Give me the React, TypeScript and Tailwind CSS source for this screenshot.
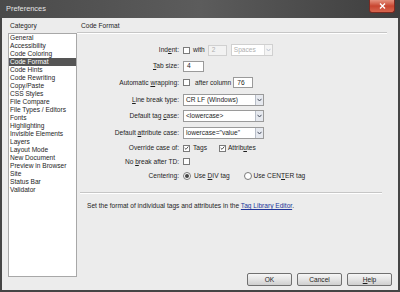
import React from 'react';

const categories = [
  'General',
  'Accessibility',
  'Code Coloring',
  'Code Format',
  'Code Hints',
  'Code Rewriting',
  'Copy/Paste',
  'CSS Styles',
  'File Compare',
  'File Types / Editors',
  'Fonts',
  'Highlighting',
  'Invisible Elements',
  'Layers',
  'Layout Mode',
  'New Document',
  'Preview in Browser',
  'Site',
  'Status Bar',
  'Validator',
];

function U({ children }: { children: React.ReactNode }) {
  return <span className="underline underline-offset-1">{children}</span>;
}

function Check({ checked = false }: { checked?: boolean }) {
  return (
    <span className="flex h-[7px] w-[7px] items-center justify-center border border-[#7a7a7a] bg-white">
      {checked && (
        <svg width="6" height="6" viewBox="0 0 6 6">
          <path d="M0.8 3 L2.4 4.6 L5.2 1.2" fill="none" stroke="#333" strokeWidth="1" />
        </svg>
      )}
    </span>
  );
}

function Radio({ checked = false }: { checked?: boolean }) {
  return (
    <span className="flex h-[8px] w-[8px] items-center justify-center rounded-full border border-[#7a7a7a] bg-white">
      {checked && <span className="h-[4px] w-[4px] rounded-full bg-[#444]" />}
    </span>
  );
}

function Arrow({ disabled = false }: { disabled?: boolean }) {
  return (
    <span
      className={`flex h-full w-[8px] items-center justify-center border-l ${
        disabled ? 'border-[#dcdcdc] bg-[#f4f4f4]' : 'border-[#b8bec8] bg-[#e6e9ef]'
      }`}
    >
      <svg width="5" height="4" viewBox="0 0 5 4">
        <path d="M0.5 0.8 L2.5 3 L4.5 0.8" fill="none" stroke={disabled ? '#b8c0d0' : '#4a5060'} strokeWidth="1" />
      </svg>
    </span>
  );
}

function Select({ value, w, disabled = false }: { value: string; w: string; disabled?: boolean }) {
  return (
    <div
      className={`flex h-[12px] items-center border bg-white ${w} ${
        disabled ? 'border-[#d0d0d0] text-[#b0b0b0]' : 'border-[#9a9a9a] text-[#1e1e1e]'
      }`}
    >
      <span className="flex-1 truncate pl-[2px]">{value}</span>
      <Arrow disabled={disabled} />
    </div>
  );
}

function Field({ value, w, disabled = false }: { value: string; w: string; disabled?: boolean }) {
  return (
    <div
      className={`flex h-[11px] items-center border pl-[3px] ${w} ${
        disabled ? 'border-[#d0d0d0] bg-[#f2f2f2] text-[#b0b0b0]' : 'border-[#9a9a9a] bg-white text-[#1e1e1e]'
      }`}
    >
      {value}
    </div>
  );
}

function Row({ label, h, children }: { label: React.ReactNode; h: string; children: React.ReactNode }) {
  return (
    <div className={`flex items-center ${h}`}>
      <div className="w-[102px] shrink-0 text-right">{label}</div>
      <div className="ml-[4px] flex items-center">{children}</div>
    </div>
  );
}

function Btn({ children }: { children: React.ReactNode }) {
  return (
    <button className="flex h-[13px] w-[45px] items-center justify-center rounded-[2px] border border-[#707070] bg-gradient-to-b from-[#f6f6f6] via-[#e4e4e4] to-[#cfcfcf] text-[#1e1e1e]">
      {children}
    </button>
  );
}

export default function App() {
  return (
    <div
      className="flex h-[292px] w-[400px] flex-col bg-[#454545] text-[6.6px] leading-[8px] text-[#1e1e1e]"
      style={{ fontFamily: '"Liberation Sans", Arial, sans-serif' }}
    >
      {/* Title bar */}
      <div className="flex h-[18px] shrink-0 items-start bg-gradient-to-r from-[#4a4a4a] via-[#5c5c5c] to-[#3e3e3e]">
        <span className="ml-[6px] mt-[4px] text-[7.4px] leading-[9px] text-[#e6e6e6]">Preferences</span>
        <div className="ml-auto mr-[5px] flex h-[13px] w-[26px] items-center justify-center rounded-b-[3px] border border-t-0 border-[#7a2a22] bg-gradient-to-b from-[#e4927f] via-[#c84530] to-[#d8664f]">
          <svg width="7" height="6" viewBox="0 0 7 6">
            <path d="M1 0.5 L6 5.5 M6 0.5 L1 5.5" stroke="#fff" strokeWidth="1.4" />
          </svg>
        </div>
      </div>

      {/* Body */}
      <div className="mx-[2px] mb-[2px] flex flex-1 bg-[#ececec]">
        {/* Category column */}
        <div className="flex w-[75px] shrink-0 flex-col pl-[6px] pt-[4px]">
          <div className="pl-[2px]">Category</div>
          <div className="mt-[3px] h-[244px] w-[69px] border border-[#a8a8a8] bg-white">
            {categories.map((c) => (
              <div
                key={c}
                className={`h-[8px] whitespace-nowrap pl-[1px] leading-[8px] ${
                  c === 'Code Format' ? 'bg-[#555555] text-white' : ''
                }`}
              >
                {c}
              </div>
            ))}
          </div>
        </div>

        {/* Panel */}
        <div className="flex flex-1 flex-col pt-[4px]">
          <div className="pl-[4px]">Code Format</div>
          <div className="mr-[11px] mt-[2px] h-[2px] border-t border-b border-t-[#c6c6c6] border-b-white" />

          <div className="mt-[8px] flex flex-col">
            <Row h="h-[16px]" label={<>Ind<U>e</U>nt:</>}>
              <Check />
              <span className="ml-[3px]">with</span>
              <Field value="2" w="w-[19px] ml-[3px]" disabled />
              <Select value="Spaces" w="w-[42px] ml-[4px]" disabled />
            </Row>
            <Row h="h-[16px]" label={<><U>T</U>ab size:</>}>
              <Field value="4" w="w-[21px]" />
            </Row>
            <Row h="h-[17px]" label={<>Automatic <U>w</U>rapping:</>}>
              <Check />
              <span className="ml-[5px]">after column</span>
              <Field value="76" w="w-[20px] ml-[2px]" />
            </Row>
            <Row h="h-[17px]" label={<><U>L</U>ine break type:</>}>
              <Select value="CR LF (Windows)" w="w-[81px]" />
            </Row>
            <Row h="h-[16px]" label={<>Default tag <U>c</U>ase:</>}>
              <Select value="<lowercase>" w="w-[81px]" />
            </Row>
            <Row h="h-[17px]" label={<>Default <U>a</U>ttribute case:</>}>
              <Select value={'lowercase="value"'} w="w-[81px]" />
            </Row>
            <Row h="h-[14px]" label="Override case of:">
              <Check checked />
              <span className="ml-[3px]">Tags</span>
              <span className="ml-[12px]">
                <Check checked />
              </span>
              <span className="ml-[2px]">
                Attrib<U>u</U>tes
              </span>
            </Row>
            <Row h="h-[13px]" label={<>No <U>b</U>reak after TD:</>}>
              <Check />
            </Row>
            <Row h="h-[16px]" label="Centering:">
              <Radio checked />
              <span className="ml-[3px]">
                Use <U>D</U>IV tag
              </span>
              <span className="ml-[14px]">
                <Radio />
              </span>
              <span className="ml-[2px]">
                Use CEN<U>T</U>ER tag
              </span>
            </Row>
          </div>

          <div className="ml-[3px] mr-[16px] mt-[8px] h-[2px] border-t border-b border-t-[#c6c6c6] border-b-white" />
          <div className="mt-[8px] pl-[10px]">
            Set the format of individual tags and attributes in the{' '}
            <span className="text-[#23379a] underline underline-offset-1">Tag Library Editor</span>.
          </div>

          <div className="mb-[4px] mr-[6px] mt-auto flex justify-end gap-[5px]">
            <Btn>OK</Btn>
            <Btn>Cancel</Btn>
            <Btn>
              <U>H</U>elp
            </Btn>
          </div>
        </div>
      </div>
    </div>
  );
}
